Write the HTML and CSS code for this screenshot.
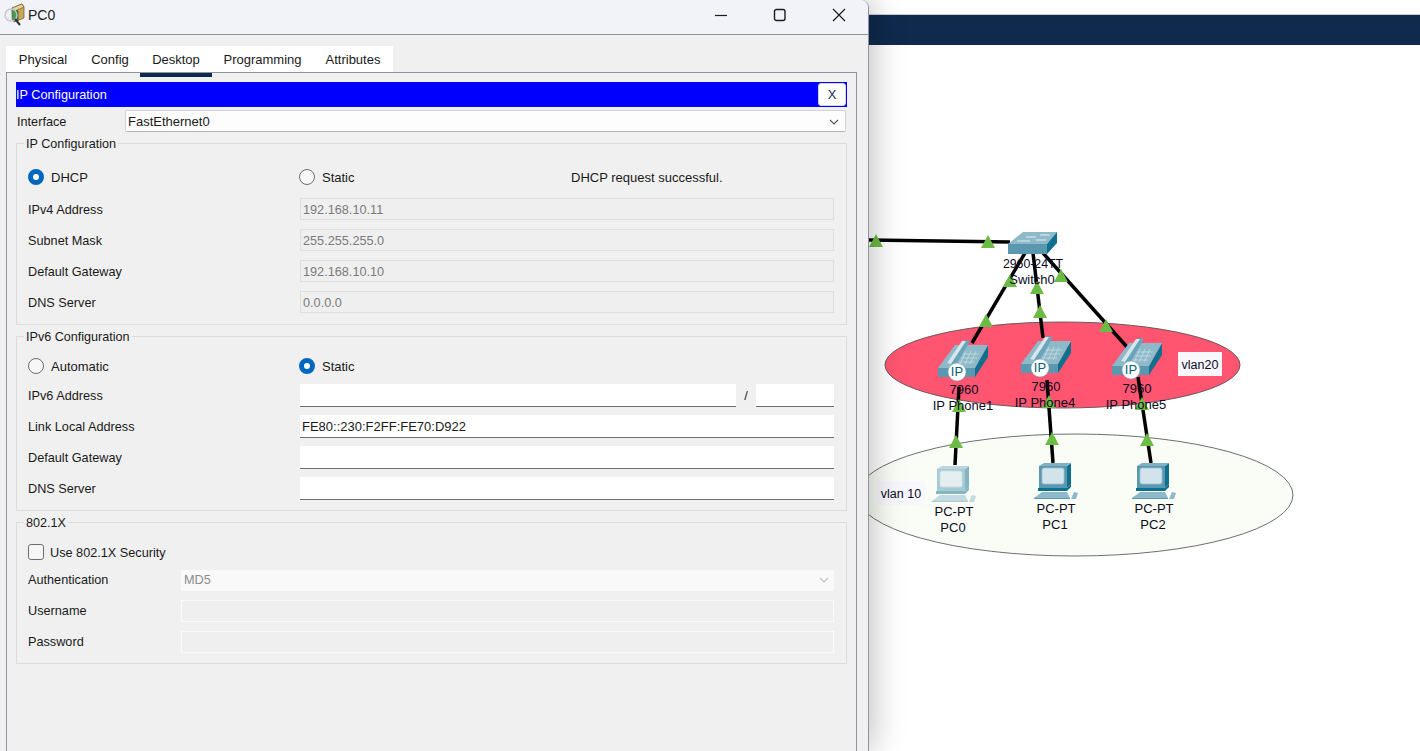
FILE: index.html
```html
<!DOCTYPE html>
<html lang="en">
<head>
<meta charset="utf-8">
<title>PC0</title>
<link rel="stylesheet" href="styles.css">
</head>
<body>
<section class="window">
  <header class="titlebar">
    <svg class="app-icon" viewBox="0 0 24 24" width="24" height="24">
      <polygon class="ai-box" points="9,5 19,1 21,4 21,15 11,19 9,16"/>
      <polygon class="ai-flap" points="9,5 19,1 21,4 12,8"/>
      <polygon class="ai-green" points="9,7 15,8 15,18 10,17"/>
      <circle class="ai-lens" cx="8" cy="12" r="6"/>
      <line class="ai-handle" x1="12" y1="16" x2="17" y2="22"/>
    </svg>
    <span class="title-text">PC0</span>
    <div class="controls">
      <svg class="ctl ctl-min" viewBox="0 0 14 14" width="14" height="14"><line x1="1" y1="7.5" x2="13" y2="7.5"/></svg>
      <svg class="ctl ctl-max" viewBox="0 0 14 14" width="14" height="14"><rect x="1.5" y="1.5" width="10.5" height="11" rx="2"/></svg>
      <svg class="ctl ctl-close" viewBox="0 0 14 14" width="14" height="14"><path d="M1 1 L13 13 M13 1 L1 13"/></svg>
    </div>
  </header>
  <div class="win-body">
    <nav class="tabs">
      <span class="tab">Physical</span>
      <span class="tab">Config</span>
      <span class="tab tab-active">Desktop</span>
      <span class="tab">Programming</span>
      <span class="tab">Attributes</span>
    </nav>
    <div class="panel">
      <div class="bar"><span>IP Configuration</span><button class="bar-x">X</button></div>
      <div class="iface">
        <span class="iface-label">Interface</span>
        <div class="combo"><span>FastEthernet0</span>
          <svg class="chev" viewBox="0 0 10 6" width="10" height="6"><path d="M1 1 L5 5 L9 1"/></svg>
        </div>
      </div>

      <div class="group group-ip4">
        <span class="legend">IP Configuration</span>
        <div class="row-mode">
          <label class="opt"><span class="radio radio-on"></span><span class="opt-text">DHCP</span></label>
          <label class="opt"><span class="radio"></span><span class="opt-text">Static</span></label>
          <span class="status">DHCP request successful.</span>
        </div>
        <div class="row"><span class="row-label">IPv4 Address</span><div class="field field-off">192.168.10.11</div></div>
        <div class="row"><span class="row-label">Subnet Mask</span><div class="field field-off">255.255.255.0</div></div>
        <div class="row"><span class="row-label">Default Gateway</span><div class="field field-off">192.168.10.10</div></div>
        <div class="row"><span class="row-label">DNS Server</span><div class="field field-off">0.0.0.0</div></div>
      </div>

      <div class="group group-ip6">
        <span class="legend">IPv6 Configuration</span>
        <div class="row-mode row-mode-6">
          <label class="opt"><span class="radio"></span><span class="opt-text">Automatic</span></label>
          <label class="opt"><span class="radio radio-on"></span><span class="opt-text">Static</span></label>
        </div>
        <div class="row"><span class="row-label">IPv6 Address</span>
          <div class="addr6"><div class="field field-on"></div><span class="slash">/</span><div class="field field-on"></div></div>
        </div>
        <div class="row"><span class="row-label">Link Local Address</span><div class="field field-on">FE80::230:F2FF:FE70:D922</div></div>
        <div class="row"><span class="row-label">Default Gateway</span><div class="field field-on"></div></div>
        <div class="row"><span class="row-label">DNS Server</span><div class="field field-on"></div></div>
      </div>

      <div class="group group-8021x">
        <span class="legend">802.1X</span>
        <label class="check-row"><span class="check"></span><span class="check-text">Use 802.1X Security</span></label>
        <div class="row row-auth"><span class="row-label">Authentication</span>
          <div class="field field-combo">MD5<svg class="chev chev-off" viewBox="0 0 10 6" width="10" height="6"><path d="M1 1 L5 5 L9 1"/></svg></div>
        </div>
        <div class="row"><span class="row-label">Username</span><div class="field field-blank"></div></div>
        <div class="row"><span class="row-label">Password</span><div class="field field-blank"></div></div>
      </div>
    </div>
  </div>
</section>

<main class="workspace">
  <div class="strip"></div>
  <div class="navy"></div>
  <div class="canvas">
    <svg class="diagram" viewBox="869 45 551 706" width="551" height="706">
      <defs>
        <polygon id="tri" points="0,0 7,13 -7,13"/>
        <g id="phone">
          <polygon class="ph-dark" points="0,23 37,23 50,0 50,12 37,32 0,32"/>
          <rect class="ph-front" x="0" y="23" width="37" height="9"/>
          <polygon class="ph-top" points="0,23 17,0 50,0 37,23"/>
          <polygon class="ph-cradle" points="9,18 26,-5 32,-4 18,20"/>
          <polygon class="ph-hand" points="9,18 24,-4 28,-4 13,19"/>
          <path class="ph-keys" d="M25 9 H41 M23 13 H39 M21 17 H36 M28 6 L22 19 M33 6 L27 19 M38 6 L32 19"/>
        </g>
        <g id="pc">
          <polygon class="pc-side" points="28,3 32,0 32,21 28,25"/>
          <polygon class="pc-top" points="0,3 5,0 32,0 28,3"/>
          <rect class="pc-front" x="0" y="3" width="28" height="22"/>
          <rect class="pc-screen" x="3" y="5" width="22" height="16" rx="2"/>
          <polygon class="pc-side" points="-1,25 28,25 32,21 32,24 28,28 -1,28"/>
          <polygon class="pc-base" points="-5,35 3,29 28,29 31,35"/>
          <polygon class="pc-front" points="-5,35 31,35 31,36 -5,36"/>
          <polygon class="pc-base" points="32,36 35,29 39,30 37,36"/>
        </g>
      </defs>

      <ellipse class="zone-red" cx="1062.5" cy="365" rx="177.5" ry="43"/>
      <ellipse class="zone-green" cx="1075" cy="495" rx="218" ry="61"/>

      <g class="links">
        <line x1="869" y1="240" x2="1010" y2="242"/>
        <line x1="1025" y1="253" x2="972" y2="343"/>
        <line x1="1033" y1="253" x2="1043" y2="338"/>
        <line x1="1043" y1="253" x2="1127" y2="347"/>
        <line x1="959" y1="387" x2="955" y2="465"/>
        <line x1="1047" y1="380" x2="1053" y2="463"/>
        <line x1="1138" y1="377" x2="1151" y2="463"/>
      </g>

      <g class="tris">
        <use href="#tri" x="876" y="234"/>
        <use href="#tri" x="988" y="235"/>
        <use href="#tri" x="1010" y="274"/>
        <use href="#tri" x="1037" y="281"/>
        <use href="#tri" x="1061" y="269"/>
        <use href="#tri" x="986" y="314"/>
        <use href="#tri" x="1040" y="305"/>
        <use href="#tri" x="1106" y="319"/>
        <use href="#tri" x="959" y="399"/>
        <use href="#tri" x="1049" y="395"/>
        <use href="#tri" x="1142" y="397"/>
        <use href="#tri" x="956" y="435"/>
        <use href="#tri" x="1052" y="432"/>
        <use href="#tri" x="1147" y="433"/>
      </g>

      <g class="switch">
        <polygon class="ph-top" points="1008,244 1023,232 1057,232 1047,244"/>
        <rect class="ph-front" x="1008" y="244" width="39" height="10"/>
        <polygon class="ph-dark" points="1047,244 1057,232 1057,243 1047,254"/>
        <path class="sw-marks" d="M1026 237 H1036 M1040 235 H1050 M1017 241 H1030 M1036 240 H1046"/>
      </g>

      <use href="#phone" x="938" y="345"/>
      <use href="#phone" x="1021" y="341"/>
      <use href="#phone" x="1112" y="343"/>

      <g class="badge"><circle cx="957" cy="372" r="9"/><text x="957" y="376">IP</text></g>
      <g class="badge"><circle cx="1040" cy="368" r="9"/><text x="1040" y="372">IP</text></g>
      <g class="badge"><circle cx="1131" cy="370" r="9"/><text x="1131" y="374">IP</text></g>

      <use class="pc-faded" href="#pc" x="937" y="466"/>
      <use href="#pc" x="1039" y="463"/>
      <use href="#pc" x="1137" y="463"/>

      <rect class="note-bg" x="1178" y="352" width="44" height="24"/>
      <rect class="note-bg" x="877" y="481" width="48" height="24"/>

      <g class="labels">
        <text class="model" x="1033" y="268">2960-24TT</text>
        <text x="1032" y="284">Switch0</text>
        <text x="964" y="394">7960</text>
        <text x="963" y="410">IP Phone1</text>
        <text x="1046" y="391">7960</text>
        <text x="1045" y="407">IP Phone4</text>
        <text x="1137" y="393">7960</text>
        <text x="1136" y="409">IP Phone5</text>
        <text x="954" y="516">PC-PT</text>
        <text x="953" y="532">PC0</text>
        <text x="1056" y="513">PC-PT</text>
        <text x="1055" y="529">PC1</text>
        <text x="1154" y="513">PC-PT</text>
        <text x="1153" y="529">PC2</text>
        <text class="note" x="1200" y="369">vlan20</text>
        <text class="note" x="901" y="498">vlan 10</text>
      </g>
    </svg>
  </div>
</main>
</body>
</html>
```

FILE: styles.css
```css
* { box-sizing: border-box; }

html, body { height: 100%; }

body {
  margin: 0;
  display: flex;
  height: 751px;
  overflow: hidden;
  background: #fff;
  font-family: "Liberation Sans", Arial, sans-serif;
  font-size: 12.7px;
  color: #1a1a1a;
}

/* Window */
.window {
  position: relative;
  z-index: 1;
  flex: none;
  width: 869px;
  height: 751px;
  display: flex;
  flex-direction: column;
  background: #f0f0f0;
  border-right: 1px solid #8f949c;
  border-top-right-radius: 8px;
  box-shadow: 2px 0 34px rgba(0, 0, 0, .28);
}

.titlebar {
  flex: none;
  height: 35px;
  display: flex;
  align-items: center;
  padding: 0 0 4px 3px;
  background: #f1f3f9;
  border-bottom: 1px solid #8f949c;
  border-top-right-radius: 8px;
}

.app-icon { flex: none; }
.ai-box { fill: #c9a65a; stroke: #6f5a2a; stroke-width: .7; }
.ai-flap { fill: #e8d49a; stroke: #6f5a2a; stroke-width: .7; }
.ai-green { fill: #1f8a2e; stroke: #0c3d14; stroke-width: .6; }
.ai-lens { fill: rgba(225, 228, 232, .2); stroke: #c4c7cb; stroke-width: 1.4; }
.ai-handle { stroke: #333; stroke-width: 2; }

.title-text {
  margin-left: 1px;
  font-size: 14px;
  color: #222;
}

.controls {
  margin-left: auto;
  margin-right: 22px;
  display: flex;
  gap: 45px;
}

.ctl { fill: none; stroke: #1c1c1c; stroke-width: 1.2; }
.ctl-max { stroke-width: 1.4; }

.win-body {
  flex: 1;
  min-height: 0;
  display: flex;
  flex-direction: column;
  padding: 11px 11px 0 6px;
}

/* Tabs */
.tabs {
  flex: none;
  display: grid;
  grid-template-columns: 74px 60px 72px 101px 80px;
  align-self: flex-start;
  height: 26px;
  background: #fff;
}

.tab {
  padding-top: 1px;
  line-height: 25px;
  font-size: 13px;
  text-align: center;
  white-space: nowrap;
  color: #1a1a1a;
}

.tab-active { border-bottom: 5px solid #0f2a4d; }

/* Panel */
.panel {
  flex: 1;
  padding: 9px;
  border: 1px solid #8f949c;
  border-bottom: 0;
}

.bar {
  height: 25px;
  display: flex;
  align-items: center;
  justify-content: space-between;
  padding-right: 1px;
  background: #00f;
  color: #fff;
}

.bar-x {
  width: 28px;
  height: 23px;
  padding: 0;
  border: 1px solid #d6d6d6;
  border-radius: 3px;
  background: #fff;
  color: #1b2a55;
  font: 13px "Liberation Sans", Arial, sans-serif;
}

.iface {
  display: flex;
  align-items: center;
  height: 22px;
  margin-top: 3px;
  padding-right: 1px;
}

.iface-label { flex: none; width: 109px; padding: 1px 0 0 1px; }

.combo {
  flex: 1;
  height: 22px;
  display: flex;
  align-items: center;
  justify-content: space-between;
  padding: 1px 6px 0 2px;
  background: #fdfdfd;
  border: 1px solid #d2d2d2;
  border-bottom-color: #b5b5b5;
  border-radius: 2px;
  font-size: 13px;
}

.chev { fill: none; stroke: #555; stroke-width: 1.1; }
.chev-off { stroke: #bdbdbd; }

/* Groups */
.group {
  position: relative;
  margin-top: 11px;
  padding: 16px 12px 7px 11px;
  border: 1px solid #dcdcdc;
}

.group-ip6 { padding: 14px 12px 6px 11px; }
.group-8021x { padding: 15px 12px 6px 11px; }

.legend {
  position: absolute;
  top: -7px;
  left: 7px;
  padding: 0 2px;
  font-size: 12.6px;
  background: #f0f0f0;
}

.row-mode {
  display: flex;
  align-items: center;
  height: 33px;
}

.row-mode-6 { height: 30px; margin-bottom: -1px; }

.opt {
  flex: none;
  width: 271px;
  display: flex;
  align-items: center;
  gap: 7px;
}

.opt-text {
  padding-top: 1px;
  font-size: 13px;
}

.status {
  padding: 1px 0 0 1px;
  font-size: 13px;
}

.radio {
  flex: none;
  width: 16px;
  height: 16px;
  border: 1px solid #6e6e6e;
  border-radius: 50%;
  background: #f7f7f7;
}

.radio-on {
  border: 5px solid #0067c0;
  background: #fff;
}

.row {
  display: grid;
  grid-template-columns: 272px 1fr;
  align-items: center;
  height: 31px;
}

.group-ip4 .row-label { padding-top: 2px; }

.group-8021x .row { grid-template-columns: 153px 1fr; }
.group-8021x .row-auth { height: 30px; }

.field {
  height: 22px;
  padding: 1px 2px 0;
  line-height: 21px;
  font-size: 13px;
  white-space: nowrap;
}

.field-off {
  background: #efefef;
  border: 1px solid #dedede;
  font-size: 12.7px;
  color: #7a7a7a;
}

.field-on {
  height: 23px;
  background: #fff;
  border-bottom: 1px solid #6f6f6f;
  color: #1a1a1a;
}

.field-combo {
  display: flex;
  align-items: center;
  justify-content: space-between;
  height: 21px;
  padding: 0 5px 0 3px;
  background: #f9f9f9;
  font-size: 12.7px;
  color: #8d8d8d;
}

.field-blank {
  background: #efefef;
  border: 1px solid #fafafa;
}

.addr6 {
  display: grid;
  grid-template-columns: 436px 20px 1fr;
  align-items: center;
}

.slash { text-align: center; }

.check-row {
  display: flex;
  align-items: center;
  gap: 6px;
  height: 28px;
  margin-bottom: -1px;
}

.check-text { padding-top: 2px; }

.check {
  flex: none;
  width: 16px;
  height: 16px;
  border: 1px solid #6e6e6e;
  border-radius: 3px;
  background: #f7f7f7;
}

/* Workspace */
.workspace {
  flex: 1;
  min-width: 0;
  display: flex;
  flex-direction: column;
}

.strip { flex: none; height: 14px; background: #fff; }

.navy {
  flex: none;
  height: 32px;
  background: #0f2a4d;
  border-top: 1px solid #c9ccd2;
  border-bottom: 1px solid #6c7686;
}

.canvas { flex: 1; min-height: 0; margin-top: -1px; background: #fff; }

.diagram { display: block; }

.zone-red { fill: #ff5570; stroke: #6b5a5e; stroke-width: 1; }
.zone-green { fill: #f9fdf6; stroke: #6d6f6d; stroke-width: 1; }

.links line { stroke: #000; stroke-width: 3.5; }
.tris use { fill: #6cbb45; }

.ph-top { fill: #8db9c9; }
.ph-front { fill: #5a98b0; }
.ph-dark { fill: #0f6f8f; }
.ph-cradle { fill: #6aa4b9; }
.ph-hand { fill: #d6e6ec; }
.ph-keys { fill: none; stroke: #c6dce4; stroke-width: .8; }
.sw-marks { fill: none; stroke: #e3eef2; stroke-width: 1; }

.badge circle { fill: #fff; stroke: #7fa9b8; stroke-width: .6; }
.badge text {
  fill: #0b5f78;
  font: 13px "Liberation Sans", Arial, sans-serif;
  text-anchor: middle;
}

.pc-top { fill: #7fb0c4; }
.pc-front { fill: #5a98b0; }
.pc-side { fill: #0f6f8f; }
.pc-screen { fill: #d3e3ec; stroke: #9cc0d0; stroke-width: .8; }
.pc-base { fill: #8db9c9; }
.pc-faded { opacity: .5; }

.note-bg { fill: #f7f7fd; }

.labels text {
  fill: #0a0a1e;
  font: 13px "Liberation Sans", Arial, sans-serif;
  text-anchor: middle;
}

.labels .model { font-size: 12.3px; }
.labels .note { font-size: 12.5px; }
```
